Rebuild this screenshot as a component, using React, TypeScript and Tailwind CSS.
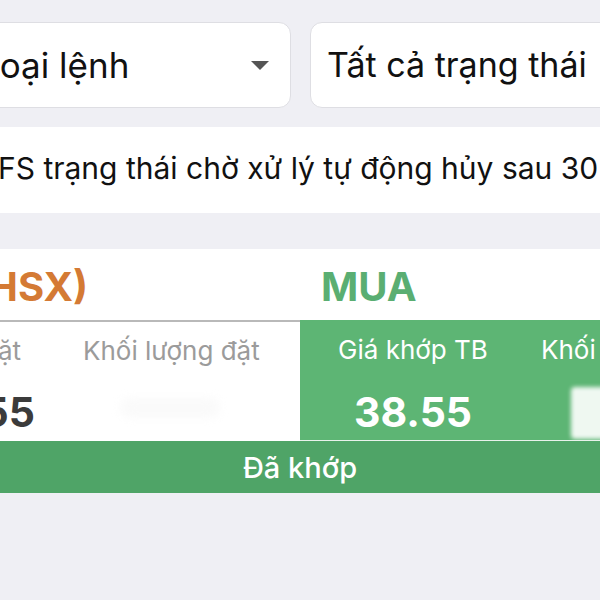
import React from "react";

export default function App() {
  const font = { fontFamily: "Inter, 'Noto Sans', sans-serif" };
  return (
    <div
      className="w-[600px] h-[600px] overflow-hidden bg-[#efeff4] text-black"
      style={font}
    >
      {/* Filters row */}
      <div className="flex gap-[19px] pt-[22px] ml-[-43px] w-[720px]">
        <div className="w-[334px] h-[86px] shrink-0 rounded-[12px] bg-white border border-[#dedee3] flex items-center justify-between pl-[22px] pr-[14px]">
          <span className="text-[35px] leading-none whitespace-nowrap text-[#111]">Loại lệnh</span>
          <svg width="18" height="9" viewBox="0 0 18 9" className="mr-[7px]">
            <path d="M0 0 H18 L9 9 Z" fill="#555" />
          </svg>
        </div>
        <div className="w-[340px] h-[86px] shrink-0 rounded-[12px] bg-white border border-[#dedee3] flex items-center pl-[16px]">
          <span className="text-[34px] leading-none whitespace-nowrap text-[#111]">Tất cả trạng thái</span>
        </div>
      </div>

      {/* Info band */}
      <div className="mt-[19px] h-[86px] bg-white flex items-center overflow-hidden">
        <span className="text-[30px] leading-none whitespace-nowrap text-[#111] pb-[4px] ml-[-2px]">
          FS trạng thái chờ xử lý tự động hủy sau 30 phút
        </span>
      </div>

      {/* Order card */}
      <div className="mt-[36px] bg-white">
        <div className="h-[71px] flex items-center pt-[4px]">
          <div className="w-[300px] shrink-0 text-[40px] font-bold leading-none text-[#d47a34] whitespace-nowrap ml-[-12px]">
            HSX)
          </div>
          <div className="pl-[33px] text-[40px] font-bold leading-none text-[#5aae72]">MUA</div>
        </div>
        <div className="flex h-[121px]">
          <div className="w-[300px] shrink-0 border-t-2 border-[#b9b9b9] flex">
            <div className="w-[90px] shrink-0 flex flex-col items-end">
              <div className="mt-[16px] text-[26px] leading-none text-[#9b9b9b] whitespace-nowrap mr-[69px]">Giá đặt</div>
              <div className="mt-[28px] text-[41px] font-bold leading-none text-[#3b3b3b] whitespace-nowrap mr-[55px]">38.55</div>
            </div>
            <div className="flex-1 flex flex-col items-start">
              <div className="mt-[16px] ml-[-7px] text-[26px] leading-none text-[#9b9b9b] whitespace-nowrap">Khối lượng đặt</div>
              <div className="mt-[34px] ml-[30px] w-[100px] h-[20px] rounded-full bg-[#fafafa] blur-[4px]" />
            </div>
          </div>
          <div className="flex-1 bg-[#5db574] flex border-b border-[#e8f2eb]">
            <div className="w-[226px] shrink-0 flex flex-col items-center">
              <div className="mt-[17px] text-[26px] leading-none text-white whitespace-nowrap">Giá khớp TB</div>
              <div className="mt-[29px] text-[41px] font-bold leading-none text-white">38.55</div>
            </div>
            <div className="flex-1 flex flex-col pl-[15px] overflow-hidden">
              <div className="mt-[17px] text-[26px] leading-none text-white whitespace-nowrap">Khối lượng khớp</div>
              <div className="mt-[24px] ml-[30px] w-[50px] h-[52px] bg-white/90 blur-[2px] rounded-[4px]" />
            </div>
          </div>
        </div>
        <div className="h-[52px] bg-[#4fa467] flex items-center justify-center">
          <span className="text-[29px] font-medium leading-none text-white">Đã khớp</span>
        </div>
      </div>
    </div>
  );
}
